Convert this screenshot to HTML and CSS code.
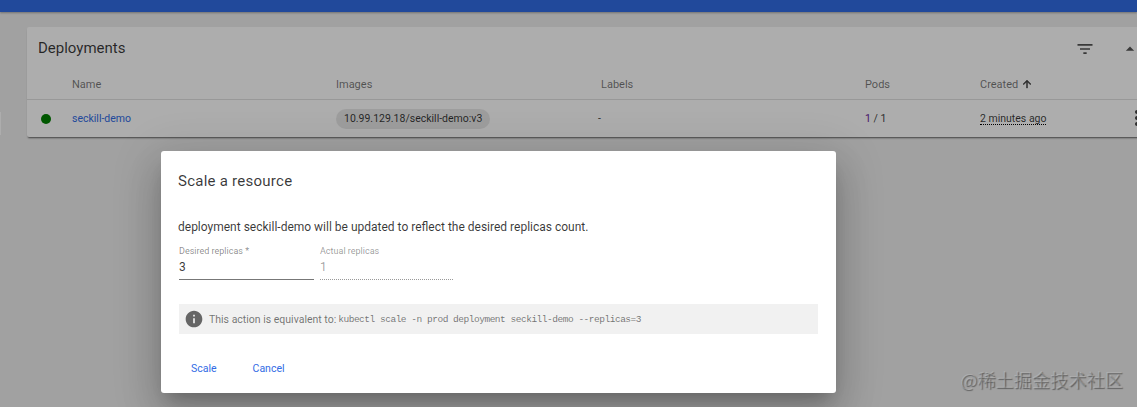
FILE: index.html
```html
<!DOCTYPE html>
<html lang="en">
<head>
    <meta charset="UTF-8">
    <meta name="viewport" content="width=device-width, initial-scale=1.0">
    <title>Deployments</title>
    <link rel="stylesheet" href="styles.css">
</head>
<body>
    <header class="toolbar"></header>
    <div class="nav-edge"></div>
    <main class="content">
        <section class="card">
            <div class="card-head">
                <h2>Deployments</h2>
                <svg class="filter-icon" width="20" height="20" viewBox="0 0 24 24"><path d="M10 18h4v-2h-4v2zM3 6v2h18V6H3zm3 7h12v-2H6v2z"/></svg>
                <svg class="collapse-icon" width="20" height="20" viewBox="0 0 24 24"><path d="M7 14l5-5 5 5z"/></svg>
            </div>
            <div class="row row-head">
                <span class="cell-status"></span>
                <span class="cell-name">Name</span>
                <span class="cell-images">Images</span>
                <span class="cell-labels">Labels</span>
                <span class="cell-pods">Pods</span>
                <span class="cell-created">Created
                    <svg width="12" height="12" viewBox="0 0 24 24"><path d="M4 12l1.41 1.41L11 7.83V20h2V7.83l5.58 5.59L20 12l-8-8-8 8z"/></svg>
                </span>
            </div>
            <div class="row row-body">
                <span class="cell-status"><i class="dot"></i></span>
                <span class="cell-name"><a href="#">seckill-demo</a></span>
                <span class="cell-images"><span class="chip">10.99.129.18/seckill-demo:v3</span></span>
                <span class="cell-labels">-</span>
                <span class="cell-pods"><b>1</b> / 1</span>
                <span class="cell-created"><span class="dotted">2 minutes ago</span></span>
                <svg class="more-icon" width="24" height="24" viewBox="0 0 24 24"><path d="M12 8c1.1 0 2-.9 2-2s-.9-2-2-2-2 .9-2 2 .9 2 2 2zm0 2c-1.1 0-2 .9-2 2s.9 2 2 2 2-.9 2-2-.9-2-2-2zm0 6c-1.1 0-2 .9-2 2s.9 2 2 2 2-.9 2-2-.9-2-2-2z"/></svg>
            </div>
        </section>
    </main>

    <div class="backdrop"></div>
    <div class="watermark">@稀土掘金技术社区</div>

    <div class="dialog">
        <h3>Scale a resource</h3>
        <p class="desc">deployment seckill-demo will be updated to reflect the desired replicas count.</p>
        <div class="fields">
            <div class="field field-desired">
                <label>Desired replicas *</label>
                <div class="value">3</div>
            </div>
            <div class="field field-actual">
                <label>Actual replicas</label>
                <div class="value">1</div>
            </div>
        </div>
        <div class="hint">
            <svg width="20" height="20" viewBox="0 0 24 24"><path d="M12 2C6.48 2 2 6.48 2 12s4.48 10 10 10 10-4.48 10-10S17.52 2 12 2zm1 15h-2v-6h2v6zm0-8h-2V7h2v2z"/></svg>
            <span>This action is equivalent to:</span>
            <code>kubectl scale -n prod deployment seckill-demo --replicas=3</code>
        </div>
        <div class="actions">
            <button type="button">Scale</button>
            <button type="button">Cancel</button>
        </div>
    </div>
</body>
</html>
```

FILE: styles.css
```css
:root {
    --primary-color: #326ce5;
    --text-color: rgba(0, 0, 0, 0.78);
    --muted-color: rgba(0, 0, 0, 0.54);
}

body {
    font-family: Roboto, 'Liberation Sans', sans-serif;
    background-color: #eeeeee;
    color: var(--text-color);
    margin: 0;
    height: 407px;
    overflow: hidden;
    position: relative;
}

.toolbar {
    height: 12px;
    background: var(--primary-color);
    box-shadow: 0 1px 2px rgba(0, 0, 0, 0.3);
}

.nav-edge {
    position: absolute;
    left: 0;
    top: 112px;
    width: 1px;
    height: 23px;
    background: #fff;
}

.content {
    padding: 15px 0 0 27px;
    width: 1130px;
}

.card {
    background: #fff;
    border-radius: 2px 0 0 2px;
    box-shadow: 0 2px 2px -1px rgba(0, 0, 0, 0.6);
    height: 110px;
}

.card-head {
    display: flex;
    align-items: center;
    height: 43px;
    padding: 0 0 0 11px;
}

h2 {
    flex: 1;
    margin: 0 0 2px;
    font-size: 15px;
    font-weight: 400;
}

.filter-icon {
    margin-right: 25px;
    fill: #555;
}

.collapse-icon {
    margin-right: 17px;
    fill: #555;
}

.row {
    display: flex;
    align-items: center;
    font-size: 11px;
    position: relative;
}

.row-head {
    height: 29px;
    color: var(--muted-color);
    border-bottom: 1px solid #e0e0e0;
}

.row-body {
    height: 37px;
    font-size: 10.5px;
}

.cell-status { width: 45px; flex: none; }
.cell-name { width: 264px; flex: none; }
.cell-images { width: 265px; flex: none; }
.cell-labels { width: 264px; flex: none; }
.cell-pods { width: 115px; flex: none; }
.cell-created { flex: none; }

.row-body .cell-labels {
    text-indent: -3px;
}

.cell-created svg {
    vertical-align: -2px;
    fill: #444;
    stroke: #444;
    stroke-width: 1;
}

.dot {
    display: block;
    width: 10px;
    height: 10px;
    margin-left: 14px;
    border-radius: 50%;
    background: #008000;
}

a {
    color: var(--primary-color);
    text-decoration: none;
}

.chip {
    display: inline-block;
    padding: 0 8px;
    height: 20px;
    line-height: 19px;
    border-radius: 10px;
    background: #e8e8e8;
}

.cell-pods b {
    font-weight: 400;
    color: #6a1b9a;
}

.dotted {
    display: inline-block;
    line-height: 11px;
    border-bottom: 1px dotted #000;
}

.more-icon {
    position: absolute;
    left: 1098px;
    top: 6px;
    fill: #444;
}

.backdrop {
    position: absolute;
    inset: 0;
    background: rgba(0, 0, 0, 0.32);
}

.watermark {
    position: absolute;
    right: 14px;
    bottom: 15px;
    font: 18px 'Noto Sans CJK SC', sans-serif;
    letter-spacing: 0.2px;
    color: rgba(255, 255, 255, 0.2);
    text-shadow: 1px 1px 1px rgba(0, 0, 0, 0.4);
}

.dialog {
    position: absolute;
    left: 161px;
    top: 151px;
    width: 675px;
    height: 242px;
    box-sizing: border-box;
    padding: 20px 18px 0;
    background: #fff;
    border-radius: 3px;
    box-shadow: 0 11px 15px -7px rgba(0, 0, 0, 0.2), 0 24px 38px 3px rgba(0, 0, 0, 0.14), 0 9px 46px 8px rgba(0, 0, 0, 0.12);
}

h3 {
    margin: 0 0 29px -1px;
    font-size: 15px;
    line-height: 20px;
    font-weight: 400;
    letter-spacing: 0.25px;
}

.desc {
    margin: 0 0 12px -1px;
    font-size: 12px;
    line-height: 14px;
}

.fields {
    display: flex;
    gap: 6px;
    margin-bottom: 24px;
}

.field label {
    display: block;
    font-size: 9px;
    line-height: 10px;
    color: rgba(0, 0, 0, 0.46);
}

.field .value {
    font-size: 12px;
    line-height: 15px;
    margin-top: 4px;
    padding-bottom: 4px;
}

.field-desired {
    width: 135px;
}

.field-desired .value {
    border-bottom: 1px solid #777;
}

.field-actual {
    width: 133px;
    color: rgba(0, 0, 0, 0.38);
}

.field-actual label {
    color: rgba(0, 0, 0, 0.4);
}

.field-actual .value {
    border-bottom: 1px dotted #999;
}

.hint {
    display: flex;
    align-items: center;
    height: 30px;
    padding: 0 0 0 5px;
    background: #f1f1f1;
    font-size: 10.5px;
    color: var(--muted-color);
}

.hint svg {
    fill: #666;
    margin-right: 5px;
}

.hint code {
    margin-left: 2px;
    font: 9.5px 'Liberation Mono', monospace;
    letter-spacing: -0.48px;
}

.actions {
    display: flex;
    gap: 36px;
    padding: 28px 0 0 12px;
}

button {
    padding: 0;
    border: none;
    background: none;
    color: var(--primary-color);
    font: 400 10.5px Roboto, sans-serif;
}
```
